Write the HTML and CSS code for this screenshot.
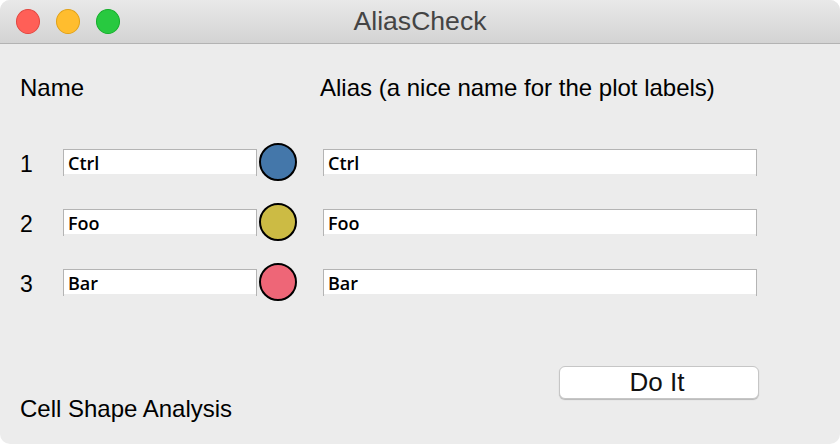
FILE: index.html
```html
<!DOCTYPE html>
<html lang="en">
<head>
<meta charset="utf-8">
<title>AliasCheck</title>
<link rel="stylesheet" href="styles.css">
</head>
<body>
<div class="window">
  <header class="titlebar">
    <div class="lights">
      <span class="light red"></span>
      <span class="light yellow"></span>
      <span class="light green"></span>
    </div>
    <div class="title">AliasCheck</div>
    <div></div>
  </header>
  <main class="content">
    <div class="head">
      <div class="head-name">Name</div>
      <div class="head-alias">Alias (a nice name for the plot labels)</div>
    </div>
    <div class="rows">
      <div class="row">
        <div class="num">1</div>
        <input class="field name" type="text" value="Ctrl">
        <div class="dot blue"></div>
        <input class="field alias" type="text" value="Ctrl">
      </div>
      <div class="row">
        <div class="num">2</div>
        <input class="field name" type="text" value="Foo">
        <div class="dot olive"></div>
        <input class="field alias" type="text" value="Foo">
      </div>
      <div class="row">
        <div class="num">3</div>
        <input class="field name" type="text" value="Bar">
        <div class="dot rose"></div>
        <input class="field alias" type="text" value="Bar">
      </div>
    </div>
    <div class="footer">
      <div class="caption">Cell Shape Analysis</div>
      <button class="btn" type="button">Do It</button>
    </div>
  </main>
</div>
</body>
</html>
```
FILE: styles.css
```css
html {
  background: #ffffff;
}
body {
  margin: 0;
  font-family: "Liberation Sans", Arial, sans-serif;
}
.window {
  width: 840px;
  height: 444px;
  background: #ececec;
  border-radius: 10px;
  overflow: hidden;
  display: flex;
  flex-direction: column;
}
.titlebar {
  height: 43px;
  border-bottom: 1px solid #b3b3b3;
  background: linear-gradient(#e9e9e9, #d3d3d3);
  display: grid;
  grid-template-columns: 1fr auto 1fr;
  align-items: center;
}
.lights {
  display: flex;
  gap: 16px;
  padding-left: 16px;
}
.light {
  width: 24px;
  height: 25px;
  border-radius: 50%;
  box-sizing: border-box;
}
.red { background: #ff5f57; border: 1px solid #e2463f; }
.yellow { background: #ffbd2e; border: 1px solid #e1a116; }
.green { background: #28c940; border: 1px solid #14ae2a; }
.title {
  font-size: 26.6px;
  line-height: 43px;
  color: #444;
}
.content {
  padding: 30px 81px 0 20px;
  display: flex;
  flex-direction: column;
}
.head {
  display: flex;
  font-size: 24px;
  line-height: 28px;
  color: #000;
}
.head-name {
  width: 300px;
}
.rows {
  margin-top: 41px;
  display: flex;
  flex-direction: column;
  gap: 22px;
}
.row {
  display: flex;
  align-items: flex-start;
  height: 38px;
}
.num {
  width: 43px;
  font-size: 23px;
  line-height: 32px;
  margin-top: 5px;
}
.field {
  box-sizing: border-box;
  height: 27px;
  margin: 6px 0 0 0;
  padding: 0 4px;
  border: 1px solid #b4b4b4;
  border-bottom: 0;
  background: linear-gradient(#ffffff calc(100% - 2px), #ececec 0);
  font-family: "Open Sans", "DejaVu Sans", sans-serif;
  font-weight: 600;
  font-size: 18px;
  color: #000;
  outline: none;
}
.field.name {
  width: 194px;
}
.field.alias {
  width: 434px;
  margin-left: 26px;
}
.dot {
  width: 38px;
  height: 38px;
  margin-left: 2px;
  border: 2px solid #000;
  border-radius: 50%;
  box-sizing: border-box;
}
.blue { background: #4477aa; }
.olive { background: #ccbb44; }
.rose { background: #ee6677; }
.footer {
  margin-top: 65px;
  display: flex;
  justify-content: space-between;
  align-items: flex-start;
}
.caption {
  margin-top: 29px;
  font-size: 24px;
  line-height: 28px;
}
.btn {
  width: 200px;
  height: 33px;
  padding: 0 4px 0 0;
  background: #ffffff;
  border: 1px solid #c6c6c6;
  border-radius: 6px;
  box-shadow: 0 1px 1px rgba(0, 0, 0, 0.22);
  font-family: "Liberation Sans", Arial, sans-serif;
  font-size: 26px;
  color: #111;
}
```
